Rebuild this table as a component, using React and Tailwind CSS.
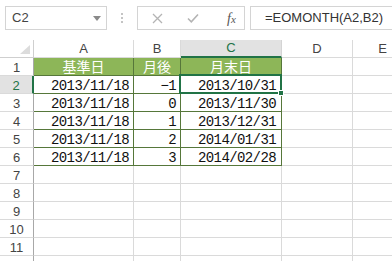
import React from 'react';

const NUM = "font-['Liberation_Mono','DejaVu_Sans_Mono',monospace] text-[14px] leading-[14px] tracking-[-0.6px] text-[#111]";
const JP = "font-['Noto_Sans_CJK_JP',sans-serif] text-[14px] leading-[17px] text-white";
const HEAD = "font-['Liberation_Sans',Arial,sans-serif] text-[13px] text-[#444]";

const data = [
  ['基準日', '月後', '月末日'],
  ['2013/11/18', '−1', '2013/10/31'],
  ['2013/11/18', '0', '2013/11/30'],
  ['2013/11/18', '1', '2013/12/31'],
  ['2013/11/18', '2', '2014/01/31'],
  ['2013/11/18', '3', '2014/02/28'],
];

function FormulaBar() {
  return (
    <div className="h-[40px] flex items-start pt-[6px] font-['Liberation_Sans',Arial,sans-serif]">
      <div className="shrink-0 ml-[5px] w-[102px] h-[24px] border border-[#d4d4d4] flex items-center justify-between pl-[6px] pr-[5px]">
        <span className="text-[13px] text-[#444]">C2</span>
        <svg width="8" height="5" viewBox="0 0 8 5">
          <path d="M0 0 L8 0 L4 5 Z" fill="#8a8a8a" />
        </svg>
      </div>
      <div className="shrink-0 w-[30px] h-[24px] flex flex-col items-center justify-center gap-[2px]">
        <span className="w-[2px] h-[2px] bg-[#c4c4c4]" />
        <span className="w-[2px] h-[2px] bg-[#c4c4c4]" />
        <span className="w-[2px] h-[2px] bg-[#c4c4c4]" />
      </div>
      <div className="shrink-0 w-[108px] h-[24px] border border-[#d4d4d4] flex items-center">
        <svg className="ml-[14px]" width="11" height="11" viewBox="0 0 11 11">
          <path d="M1 1 L10 10 M10 1 L1 10" stroke="#b4b4b4" strokeWidth="1.3" fill="none" />
        </svg>
        <svg className="ml-[24px]" width="12" height="10" viewBox="0 0 12 10">
          <path d="M1 5.5 L4.3 8.8 L11 1.5" stroke="#b4b4b4" strokeWidth="1.6" fill="none" />
        </svg>
        <span className="ml-[28px] font-['Liberation_Serif',serif] italic text-[14px] text-[#555]">
          f<span className="text-[11px]">x</span>
        </span>
      </div>
      <div className="shrink-0 ml-[5px] w-[200px] h-[24px] border border-[#d4d4d4] flex items-center pl-[14px]">
        <span className="text-[13px] text-[#333] whitespace-nowrap">=EOMONTH(A2,B2)</span>
      </div>
    </div>
  );
}

function ColumnHeaders() {
  return (
    <>
      <div className="h-[18px] border-r border-b border-[#cfcfcf] flex items-end justify-end pr-[3px] pb-[3px]">
        <svg width="10" height="9" viewBox="0 0 10 9">
          <path d="M10 0 L10 9 L0 9 Z" fill="#dcdcdc" />
        </svg>
      </div>
      {['A', 'B', 'C', 'D', 'E'].map((c) => {
        const sel = c === 'C';
        return (
          <div
            key={c}
            className={
              sel
                ? `h-[18px] bg-[#e2e2e2] border-r border-[#d4d4d4] border-b-2 border-b-[#217346] flex items-center justify-center ${HEAD} !text-[#217346]`
                : `h-[18px] border-r border-b border-[#dadada] flex items-center justify-center ${HEAD}`
            }
          >
            {c}
          </div>
        );
      })}
    </>
  );
}

function RowHeader({ n }) {
  const sel = n === 2;
  return (
    <div
      className={
        sel
          ? `h-[18px] bg-[#e2e2e2] border-b border-[#dadada] border-r-2 border-r-[#217346] flex items-center justify-center pt-[2px] ${HEAD} !text-[#217346]`
          : `h-[18px] border-b border-[#dadada] border-r border-r-[#a8a8a8] flex items-center justify-center pt-[2px] ${HEAD}`
      }
    >
      {n <= 11 ? n : ''}
    </div>
  );
}

function TableRow({ r }) {
  const row = data[r - 1];
  if (r === 1) {
    return (
      <>
        {row.map((t, i) => (
          <div
            key={i}
            className={`h-[18px] bg-[#8db658] border-r border-b border-[#56773a] flex items-end justify-center ${JP}`}
          >
            {t}
          </div>
        ))}
      </>
    );
  }
  return (
    <>
      <div className={`h-[18px] border-r border-b border-[#56773a] flex items-end justify-end pr-[4px] ${NUM}`}>
        {row[0]}
      </div>
      <div className={`h-[18px] border-r border-b border-[#56773a] flex items-end justify-end pr-[4px] ${NUM}`}>
        {row[1]}
      </div>
      <div className={`relative h-[18px] border-r border-b border-[#56773a] flex items-end justify-end pr-[5px] ${NUM}`}>
        {row[2]}
        {r === 2 && (
          <div className="absolute z-10 left-[-2px] top-[-2px] right-[-1px] bottom-[-1px] border-2 border-[#217346]">
            <div className="absolute right-[-4px] bottom-[-4px] w-[6px] h-[6px] bg-[#217346] border border-white" />
          </div>
        )}
      </div>
    </>
  );
}

function EmptyCells({ count }) {
  return (
    <>
      {Array.from({ length: count }).map((_, i) => (
        <div key={i} className="h-[18px] border-r border-b border-[#dadada]" />
      ))}
    </>
  );
}

export default function App() {
  const rows = Array.from({ length: 12 }, (_, i) => i + 1);
  return (
    <div className="w-[392px] h-[261px] overflow-hidden bg-white">
      <FormulaBar />
      <div className="grid grid-cols-[34px_100px_47px_101px_71px_60px]">
        <ColumnHeaders />
        {rows.map((r) => (
          <React.Fragment key={r}>
            <RowHeader n={r} />
            {r <= 6 ? <TableRow r={r} /> : <EmptyCells count={3} />}
            <EmptyCells count={2} />
          </React.Fragment>
        ))}
      </div>
    </div>
  );
}
